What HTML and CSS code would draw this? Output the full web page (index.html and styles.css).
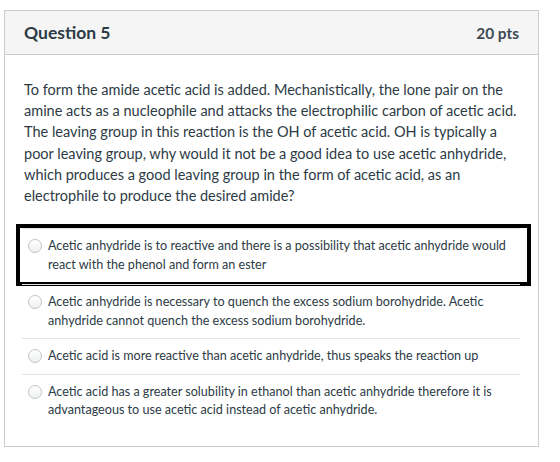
FILE: index.html
```html
<!DOCTYPE html>
<html lang="en">
<head>
  <meta charset="UTF-8">
  <meta name="viewport" content="width=device-width, initial-scale=1.0">
  <title>Question 5</title>
  <link rel="stylesheet" href="styles.css">
</head>
<body>
  <div class="question">
    <div class="header">
      <span class="name">Question 5</span>
      <span class="pts">20 pts</span>
    </div>

    <div class="content">
      <p class="prompt">To form the amide acetic acid is added. Mechanistically, the lone pair on the amine acts as a nucleophile and attacks the electrophilic carbon of acetic acid. The leaving group in this reaction is the OH of acetic acid. OH is typically a poor leaving group, why would it not be a good idea to use acetic anhydride, which produces a good leaving group in the form of acetic acid, as an electrophile to produce the desired amide?</p>

      <div class="answers">
        <div class="marked">
          <label class="answer">
            <input type="radio" name="q5">
            <span>Acetic anhydride is to reactive and there is a possibility that acetic anhydride would react with the phenol and form an ester</span>
          </label>
        </div>
        <label class="answer">
          <input type="radio" name="q5">
          <span>Acetic anhydride is necessary to quench the excess sodium borohydride. Acetic anhydride cannot quench the excess sodium borohydride.</span>
        </label>
        <label class="answer">
          <input type="radio" name="q5">
          <span>Acetic acid is more reactive than acetic anhydride, thus speaks the reaction up</span>
        </label>
        <label class="answer">
          <input type="radio" name="q5">
          <span>Acetic acid has a greater solubility in ethanol than acetic anhydride therefore it is advantageous to use acetic acid instead of acetic anhydride.</span>
        </label>
      </div>
    </div>
  </div>
</body>
</html>
```

FILE: styles.css
```css
body {
  margin: 0;
  background: #fff;
  font-family: Lato, "Open Sans", sans-serif;
  color: #2d3b45;
}
.question {
  box-sizing: border-box;
  width: 535px;
  height: 437px;
  margin: 10px 0 0 4px;
  border: 1px solid #c7cdd1;
}
.header {
  display: flex;
  justify-content: space-between;
  align-items: center;
  height: 43px;
  padding: 0 19px;
  background: #f5f5f5;
  border-bottom: 1px solid #c7cdd1;
}
.name {
  font-size: 17.5px;
  font-weight: 700;
}
.pts {
  font-size: 15.4px;
  font-weight: 700;
  color: #3d4a53;
}
.content {
  padding: 24px 18px 18px 17px;
}
.prompt {
  margin: 0 0 18px 2px;
  font-size: 14.5px;
  line-height: 21.2px;
}
.answers {
  font-size: 12.6px;
  line-height: 18.5px;
}
.marked {
  margin: 0 -11px -2px -6px;
  padding: 0 7px 0 2px;
  border: 4px solid #000;
}
.answer {
  display: flex;
  align-items: flex-start;
  gap: 6px;
  padding: 8px 6px 8px;
  border-top: 1px solid #e2e5e7;
}
.answer input {
  flex: none;
  appearance: none;
  width: 14px;
  height: 14px;
  margin: 2px 0 0 0;
  border: 1px solid #c0c4c7;
  border-radius: 50%;
  background: linear-gradient(#fff, #eef0f1);
}
```
